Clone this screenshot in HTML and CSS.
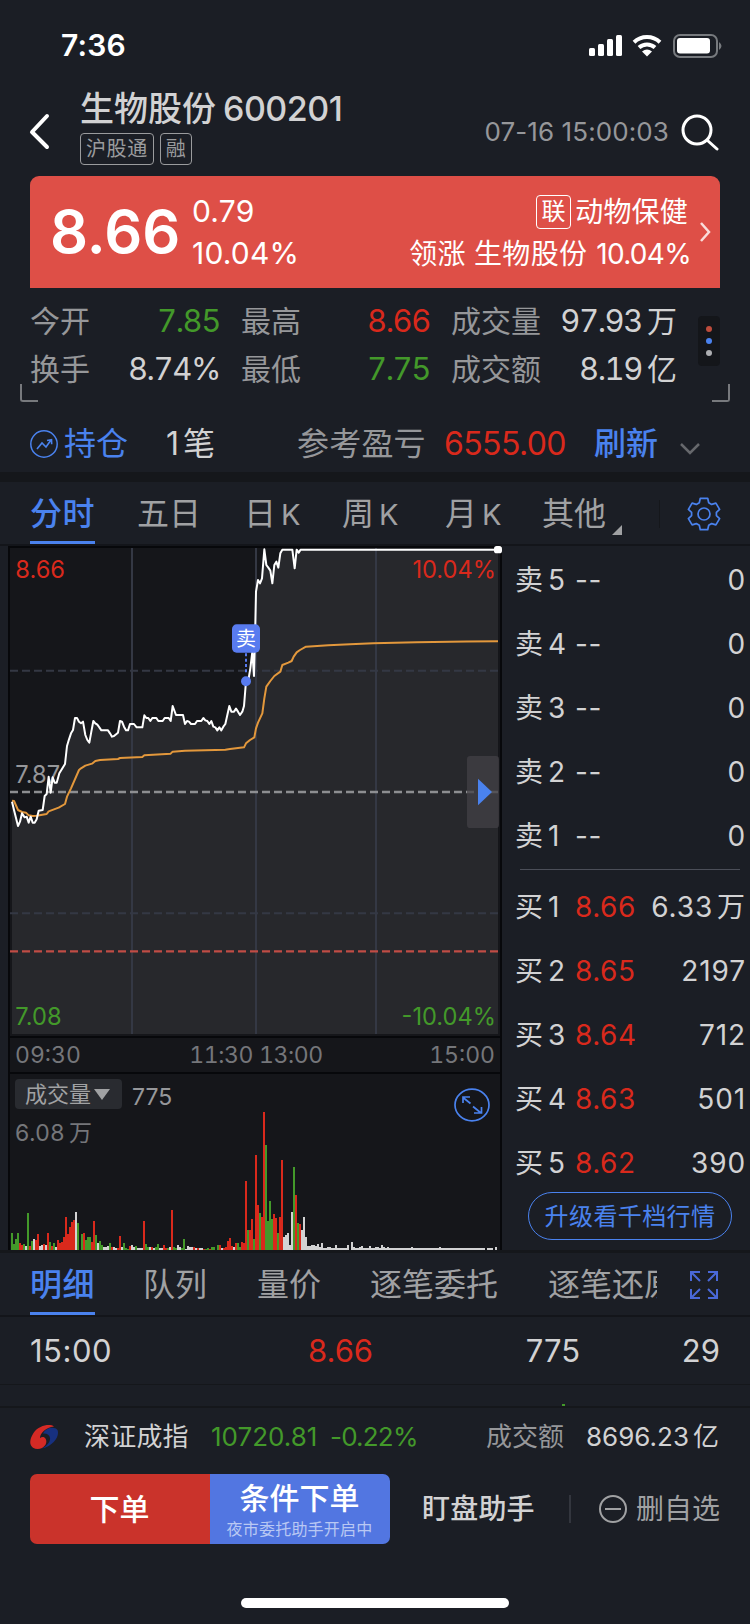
FILE: index.html
```html
<!DOCTYPE html>
<html lang="zh-CN">

<head>
    <meta charset="UTF-8">
    <meta name="viewport" content="width=device-width, initial-scale=1.0">
    <link rel="stylesheet" href="styles.css">
    <title>生物股份 600201</title>
</head>

<body>
    <div class="statusbar">
        <span class="clock">7:36</span>
        <svg class="status-icons" width="136" height="26" viewBox="0 0 136 26">
            <g fill="#fff">
                <rect x="3" y="15" width="6" height="8" rx="1.5" />
                <rect x="12" y="11" width="6" height="12" rx="1.5" />
                <rect x="21" y="6" width="6" height="17" rx="1.5" />
                <rect x="30" y="2" width="6" height="21" rx="1.5" />
            </g>
            <g fill="none" stroke="#fff" stroke-width="4">
                <path d="M48 9.2a19 19 0 0 1 26 0" />
                <path d="M53 14.5a12 12 0 0 1 16 0" />
            </g>
            <path d="M56 18.6q5-4 10 0l-5 5z" fill="#fff" />
            <rect x="88" y="2" width="43" height="22" rx="6" fill="none" stroke="#777a7e" stroke-width="2" />
            <rect x="91" y="5" width="33" height="15.500" rx="3" fill="#fff" />
            <path d="M133 9q5 4 0 8z" fill="#777a7e" />
        </svg>
    </div>

    <div class="header">
        <svg class="back" width="22" height="38" viewBox="0 0 22 38">
            <path d="M18 3L3 19l15 15" fill="none" stroke="#fff" stroke-width="4" stroke-linecap="round" stroke-linejoin="round" />
        </svg>
        <div class="stock">
            <h1><span>生物股份</span><span class="code">600201</span></h1>
            <div class="tags"><span class="tag">沪股通</span><span class="tag">融</span></div>
        </div>
        <span class="datetime">07-16 15:00:03</span>
        <svg class="search" width="38" height="38" viewBox="0 0 38 38" fill="none" stroke="#fff" stroke-width="3" stroke-linecap="round">
            <circle cx="16" cy="16" r="14" />
            <path d="M26.500 26.500L36 35" />
        </svg>
    </div>

    <div class="price-card">
        <span class="price">8.66</span>
        <div class="change">
            <span>0.79</span>
            <span>10.04%</span>
        </div>
        <div class="sector">
            <div class="sector-name"><span class="link-tag">联</span>动物保健</div>
            <div class="sector-top"><span>领涨 生物股份</span><span class="pct">10.04%</span></div>
        </div>
        <svg width="12" height="22" viewBox="0 0 12 22">
            <path d="M2 2l8 9-8 9" fill="none" stroke="#f9dcda" stroke-width="2.500" />
        </svg>
    </div>

    <div class="stats">
        <div class="stats-grid">
            <span class="label">今开</span><span class="num green">7.85</span>
            <span class="label">最高</span><span class="num red">8.66</span>
            <span class="label">成交量</span><span class="num">97.93<i>万</i></span>
            <span class="label">换手</span><span class="num">8.74%</span>
            <span class="label">最低</span><span class="num green">7.75</span>
            <span class="label">成交额</span><span class="num">8.19<i>亿</i></span>
        </div>
        <div class="dots"><b></b><b></b><b></b></div>
    </div>
    <div class="corners"><span></span><span></span></div>

    <div class="position">
        <svg class="pos-icon" width="28" height="28" viewBox="0 0 28 28" fill="none" stroke="#4a82ee">
            <circle cx="14" cy="14" r="13.200" stroke-width="1.500" />
            <path d="M7 19l5-6 4 4 5-7M17 10.500l4.500-.7.200 4.500" stroke-width="1.600" />
        </svg>
        <span class="hold">持仓</span>
        <span class="lots">1<i>笔</i></span>
        <span class="pl-label">参考盈亏</span>
        <span class="pl">6555.00</span>
        <span class="refresh">刷新</span>
        <svg class="fold" width="20" height="12" viewBox="0 0 20 12">
            <path d="M1 1l9 9 9-9" fill="none" stroke="#66686c" stroke-width="2.500" />
        </svg>
    </div>

    <div class="tabs">
        <span class="active">分时</span>
        <span>五日</span>
        <span>日<em>K</em></span>
        <span>周<em>K</em></span>
        <span>月<em>K</em></span>
        <span class="other">其他<svg width="10" height="10" viewBox="0 0 10 10"><path d="M10 0v10H0z" fill="#a0a1a3" /></svg></span>
        <svg class="gear" width="34" height="34" viewBox="0 0 34 34" fill="none" stroke="#4a82ee" stroke-width="1.700" stroke-linejoin="round">
            <path d="M13.300 1.300h7.400l1 4.400 3 1.700 4.200-1.300 3.700 6.300-3.200 3v3.200l3.200 3-3.700 6.300-4.200-1.300-3 1.700-1 4.400h-7.400l-1-4.400-3-1.700-4.200 1.300-3.700-6.300 3.200-3v-3.200l-3.200-3 3.700-6.300 4.200 1.300 3-1.700z" />
            <circle cx="17" cy="17" r="6" />
        </svg>
    </div>

    <div class="market">
        <div class="chart">
            <!-- plot units are a third of a pixel -->
            <svg class="trend" width="494" height="490" viewBox="24 18 1482 1470">
                <path class="area" d="" />
                <g stroke="#343844" stroke-width="6">
                    <path d="M396 24V1482M768 24V1482M1128 24V1482" />
                    <path d="M30 392H1494M30 1120H1494" stroke-dasharray="24 12" />
                </g>
                <path d="M30 756H1494" stroke="#8d8e91" stroke-width="7" stroke-dasharray="24 12" />
                <path d="M30 1234H1494" stroke="#c04c45" stroke-width="7" stroke-dasharray="24 12" />
                <g class="axis">
                    <text x="46" y="114" fill="#d9291c">8.66</text>
                    <text x="1488" y="114" fill="#d9291c" text-anchor="end">10.04%</text>
                    <text x="46" y="729" fill="#96979a">7.87</text>
                    <text x="46" y="1454" fill="#43992a">7.08</text>
                    <text x="1488" y="1454" fill="#43992a" text-anchor="end">-10.04%</text>
                </g>
                <polyline class="average" points="36,782 42,783 54,810 66,816 78,818 86,826 98,828 110,827 140,822 146,814 176,803 195,792 201,770 213,745 237,690 243,685 256,677 276,671 286,663 300,660 354,657 360,654 427,651 433,646 512,641 518,635 555,632 676,629 690,627 732,622 738,610 750,600 763,592 768,565 774,548 787,520 793,475 799,440 811,423 823,408 841,395 847,375 865,368 875,363 881,350 890,337 900,330 918,320 985,316 1050,313 1120,310 1250,307 1400,304.5 1494,304" />
                <polyline class="line" points="36,785 42,810 54,858 60,845 66,820 74,832 80,830 86,848 92,830 98,848 104,848 110,838 116,812 128,810 134,768 140,762 146,710 152,758 158,712 164,728 170,728 178,700 195,672 201,618 207,598 213,580 219,570 225,534 231,534 237,545 243,550 249,545 256,585 262,600 268,608 274,575 280,543 286,550 292,554 298,562 304,571 324,571 330,580 336,590 342,588 354,578 360,543 366,545 372,560 378,571 384,571 390,552 402,552 410,562 427,562 433,526 439,534 445,534 451,543 457,534 469,534 475,543 488,543 494,534 506,534 512,543 518,498 528,525 549,525 555,552 561,543 567,545 573,552 585,552 591,543 604,543 610,534 616,541 622,543 628,552 634,543 640,560 646,562 652,571 658,562 664,571 670,560 676,552 682,525 688,498 694,515 702,515 708,506 714,515 720,525 727,515 732,498 738,424 746,415 751,385 757,335 762,408 766,250 768,155 774,120 780,130 786,115 793,28 799,75 805,83 811,92 817,130 823,75 829,65 835,83 841,40 847,29 877,29 884,85 890,29 896,38 902,29 1494,29" />
                <path d="M738 340V400" stroke="#587bef" stroke-width="6" stroke-dasharray="9 7" />
                <rect x="696" y="253" width="84" height="85" rx="14" fill="#587bef" />
                <text class="sell-mark" x="738" y="318" text-anchor="middle">卖</text>
                <circle cx="738" cy="424" r="15" fill="#587bef" />
                <rect x="1401" y="648" width="96" height="216" rx="10" fill="#434046" fill-opacity=".75" />
                <path d="M1434 716v80l42-40z" fill="#4a82ee" />
                <rect x="1482" y="18" width="24" height="22" rx="8" fill="#fff" />
            </svg>
            <div class="times"><span>09:30</span><span class="noon">11:30 13:00</span><span>15:00</span></div>
            <div class="volume">
                <div class="volume-head">
                    <span class="select">成交量<svg width="16" height="11" viewBox="0 0 16 11"><path d="M0 0h16L8 11z" fill="#a0a1a3" /></svg></span>
                    <span class="last">775</span>
                    <svg class="zoom" width="36" height="34" viewBox="0 0 36 34" fill="none" stroke="#4a82ee">
                        <ellipse cx="18" cy="17" rx="17" ry="15.800" stroke-width="1.700" />
                        <path d="M16.500 15.500L9 9.500M9 15V9h7M19 18.500l8 6.500M20 25h7.500v-6" stroke-width="1.700" />
                    </svg>
                </div>
                <span class="volume-max">6.08<i>万</i></span>
                <svg class="bars" width="494" height="140" viewBox="24 240 1482 420" shape-rendering="crispEdges"></svg>
            </div>
        </div>

        <div class="book">
            <div class="order"><span>卖<em>5</em></span><span>--</span><span>0</span></div>
            <div class="order"><span>卖<em>4</em></span><span>--</span><span>0</span></div>
            <div class="order"><span>卖<em>3</em></span><span>--</span><span>0</span></div>
            <div class="order"><span>卖<em>2</em></span><span>--</span><span>0</span></div>
            <div class="order"><span>卖<em>1</em></span><span>--</span><span>0</span></div>
            <hr>
            <div class="order"><span>买<em>1</em></span><span class="red">8.66</span><span>6.33<i>万</i></span></div>
            <div class="order"><span>买<em>2</em></span><span class="red">8.65</span><span>2197</span></div>
            <div class="order"><span>买<em>3</em></span><span class="red">8.64</span><span>712</span></div>
            <div class="order"><span>买<em>4</em></span><span class="red">8.63</span><span>501</span></div>
            <div class="order"><span>买<em>5</em></span><span class="red">8.62</span><span>390</span></div>
            <a class="upgrade">升级看千档行情</a>
        </div>
    </div>

    <div class="tabs detail-tabs">
        <span class="active">明细</span>
        <span>队列</span>
        <span>量价</span>
        <span>逐笔委托</span>
        <span class="cut">逐笔还原</span>
        <svg class="expand" width="28" height="28" viewBox="0 0 28 28" fill="none" stroke="#4a68d8" stroke-width="2">
            <path d="M1 10V1h9M1 1l9 9M18 1h9v9M27 1l-9 9M1 18v9h9M1 27l9-9M27 18v9h-9M27 27l-9-9" />
        </svg>
    </div>

    <div class="trade">
        <span>15:00</span><span class="red">8.66</span><span>775</span><span>29</span>
    </div>
    <div class="trade-next"><span></span></div>

    <div class="index">
        <svg class="logo" width="29" height="26" viewBox="0 0 29 26">
            <path d="M24 2.500C20-.5 9 1 3.500 9-.5 15-1 21 3 23.800c4 2.500 10 1.200 12.500-3 1.500-3 1-6-1.500-7.500-1.500-.5-3 0-4 1C10 9 16 3.500 24 2.500z" fill="#d52a25" />
            <path d="M13 9.500C16 3 25 2 27.500 6c2.500 6-4 16-15.500 18.500 5-2.500 8.500-7 8-10.500-.5-3.500-3.500-5-7-4.500z" fill="#17307f" />
        </svg>
        <span class="index-name">深证成指</span>
        <span class="index-value green">10720.81</span>
        <span class="index-pct green">-0.22%</span>
        <span class="index-label">成交额</span>
        <span class="index-amount">8696.23<i>亿</i></span>
    </div>

    <div class="actions">
        <a class="order-btn">下单</a>
        <a class="cond-btn">条件下单<small>夜市委托助手开启中</small></a>
        <span class="watch">盯盘助手</span>
        <span class="sep"></span>
        <svg width="28" height="28" viewBox="0 0 28 28" fill="none" stroke="#a0a1a3" stroke-width="2">
            <circle cx="14" cy="14" r="13" />
            <path d="M6 14h16" />
        </svg>
        <span class="remove">删自选</span>
    </div>
    <div class="home"></div>

    <script src="chart.js"></script>
</body>

</html>
```
FILE: styles.css
```css
* {
    box-sizing: border-box;
}

body {
    width: 750px;
    height: 1624px;
    margin: 0;
    overflow: hidden;
    background-color: #1b1e25;
    color: #d2d2d3;
    font-family: Inter, "Noto Sans CJK SC", sans-serif;
    font-size: 30px;
    line-height: 1;
    white-space: nowrap;
}

svg {
    display: block;
    flex: none;
}

i,
em {
    font-style: normal;
}

i {
    margin-left: 4px;
}

.red {
    color: #d9291c;
}

.green {
    color: #43992a;
}

.statusbar {
    display: flex;
    justify-content: space-between;
    height: 90px;
    padding: 30px 28px 0 61px;
}

.clock {
    color: #fff;
    font-weight: 600;
    letter-spacing: 0.2px;
    line-height: 31px;
}

.status-icons {
    margin-top: 3px;
}

.header {
    display: flex;
    height: 86px;
    padding: 0 31px 0 29px;
}

.back {
    margin-top: 23px;
}

.stock {
    margin-left: 29px;
}

h1 {
    display: flex;
    gap: 7px;
    margin: 0;
    height: 43px;
    font-size: 34px;
    font-weight: 500;
    line-height: 37px;
}

.code {
    letter-spacing: -0.5px;
}

.tags {
    display: flex;
    gap: 6px;
}

.tag {
    height: 32px;
    padding: 0 5px;
    border: 1px solid #9a9b9d;
    border-radius: 4px;
    color: #9a9b9d;
    font-size: 20px;
    letter-spacing: 0.6px;
    line-height: 30px;
}

.datetime {
    margin: 29px 12px 0 auto;
    color: #96979a;
    font-size: 26px;
    letter-spacing: 0.1px;
}

.search {
    margin-top: 24px;
}

.price-card {
    display: flex;
    align-items: center;
    height: 112px;
    margin: 0 30px;
    padding: 0 9px 0 20px;
    border-radius: 9px 9px 0 0;
    background-color: #de4f47;
    color: #fff;
}

.price {
    width: 142px;
    font-size: 59.5px;
    font-weight: 600;
}

.change {
    letter-spacing: 0.2px;
}

.change span {
    display: block;
    height: 42px;
    line-height: 42px;
}

.sector {
    margin: 0 10px 0 auto;
    font-size: 28px;
}

.sector > div {
    display: flex;
    align-items: center;
    justify-content: flex-end;
    height: 42px;
    padding-top: 2px;
}

.sector .sector-name {
    padding-right: 1px;
    letter-spacing: 0.2px;
}

.link-tag {
    width: 35px;
    height: 34px;
    margin: -1px 4px 0 0;
    border: 1px solid #fff;
    border-radius: 4px;
    font-size: 24px;
    line-height: 31px;
    text-align: center;
}

.sector-top {
    letter-spacing: 0.3px;
}

.pct {
    margin: 0 -2px 0 9px;
    letter-spacing: -0.7px;
}

.stats {
    display: flex;
    height: 96px;
    padding: 9px 30px 0;
}

.stats-grid {
    display: grid;
    grid-template-columns: 60px 151px 60px 150px 90px 136px;
    grid-auto-rows: 48px;
    line-height: 48px;
}

.stats .label {
    color: #96979a;
}

.stats .num {
    font-size: 31px;
    font-feature-settings: "tnum";
    letter-spacing: -1.4px;
    text-align: right;
}

.stats .num i {
    margin-left: 5px;
    font-size: 30px;
    letter-spacing: 0;
}

.stats .num:nth-child(6n+2),
.stats .num:nth-child(6n+4) {
    padding-right: 21px;
}

.dots {
    display: flex;
    flex-direction: column;
    align-items: center;
    justify-content: center;
    gap: 6px;
    width: 22px;
    height: 50px;
    margin: 19px 0 0 auto;
    border-radius: 4px;
    background-color: #14161a;
}

.dots b {
    width: 6px;
    height: 6px;
    border-radius: 50%;
    background-color: #bd4c3c;
}

.dots b:nth-child(2) {
    background-color: #4a82ee;
}

.dots b:nth-child(3) {
    background-color: #adaeb1;
}

.corners {
    display: flex;
    justify-content: space-between;
    height: 31px;
    padding: 0 20px;
}

.corners span {
    width: 18px;
    height: 18px;
    border: solid #77797d;
    border-width: 0 0 2px 2px;
    border-radius: 0 0 0 3px;
}

.corners span + span {
    border-width: 0 2px 2px 0;
    border-radius: 0 0 3px 0;
}

.position {
    display: flex;
    align-items: center;
    height: 57px;
    padding-left: 30px;
    font-size: 32px;
    line-height: 57px;
}

.pos-icon {
    margin-top: 1px;
}

.hold {
    width: 101px;
    padding-left: 6px;
    color: #4a82ee;
}

.lots {
    width: 138px;
    padding-left: 7px;
}

.pl-label {
    width: 147px;
    color: #96979a;
    letter-spacing: 0.2px;
}

.pl {
    width: 150px;
    color: #d9291c;
    letter-spacing: -0.6px;
}

.refresh {
    width: 86px;
    color: #4a82ee;
    font-weight: 500;
}

.fold {
    margin-top: 10px;
}

.tabs {
    display: grid;
    grid-template-columns: 107px 107px 98px 103px 97px 145px 34px;
    height: 74px;
    padding: 0 30px;
    border-top: 10px solid #15171b;
    border-bottom: 2px solid #13151a;
    color: #a0a1a3;
    font-size: 32px;
    line-height: 64px;
}

.tabs em {
    margin-left: 5px;
    font-size: 29px;
}

.tabs .active {
    justify-self: start;
    height: 62px;
    border-bottom: 3px solid #4a82ee;
    color: #4a82ee;
    font-weight: 500;
    letter-spacing: 0.5px;
}

.other {
    display: flex;
    height: 28px;
    margin: 18px 27px 0 0;
    border-right: 1px solid #15171b;
    line-height: 28px;
}

.other svg {
    margin: 25px 0 0 6px;
}

.gear {
    margin-top: 15px;
}

.market {
    display: grid;
    grid-template-columns: 494px 1fr;
    height: 704px;
    padding-left: 8px;
}

.chart {
    height: 704px;
    background-color: #15161a;
    box-shadow: inset 2px 0 #07080b, inset -2px 0 #07080b, inset 0 2px #07080b;
}

.area {
    fill: #27282c;
}

.line,
.average {
    fill: none;
    stroke: #fff;
    stroke-width: 6;
    stroke-linejoin: round;
}

.average {
    stroke: #e3983c;
}

.axis {
    font-size: 71px;
}

.sell-mark {
    fill: #fff;
    font-size: 60px;
}

.times {
    display: flex;
    justify-content: space-between;
    height: 38px;
    padding: 0 5px;
    border: solid #07080b;
    border-width: 2px;
    color: #75767a;
    font-size: 23px;
    font-feature-settings: "tnum";
    line-height: 35px;
}

.noon {
    padding-left: 2px;
    letter-spacing: -0.4px;
}

.volume {
    height: 176px;
    overflow: hidden;
    color: #75767a;
    font-size: 23px;
}

.volume-head {
    display: flex;
    height: 42px;
    padding: 5px 12px 0 7px;
}

.select {
    display: flex;
    width: 107px;
    height: 30px;
    padding-left: 10px;
    border-radius: 4px;
    background-color: #292b30;
    color: #a0a1a3;
    font-size: 22px;
    line-height: 30px;
}

.select svg {
    margin: 10px 0 0 3px;
}

.last {
    padding-left: 10px;
    color: #96979a;
    line-height: 36px;
}

.zoom {
    margin: 9px 0 0 auto;
}

.volume-max {
    display: block;
    height: 0;
    padding-left: 7px;
    letter-spacing: 0.4px;
    line-height: 34px;
}

.bars {
    margin-top: -6px;
}

.book {
    padding: 2px 5px 0 13px;
    font-size: 28px;
}

.order {
    display: flex;
    height: 64px;
    line-height: 64px;
}

.order span:first-child {
    width: 60px;
}

.order em {
    margin-left: 5px;
}

.order span + span {
    letter-spacing: 0.5px;
}

.order span:last-child {
    margin: 0 -1px 0 auto;
    letter-spacing: 0.9px;
}

hr {
    height: 1px;
    margin: 1px 5px 5px 5px;
    border: 0;
    background-color: #4b4e58;
}

.upgrade {
    display: block;
    width: 204px;
    height: 48px;
    margin: -3px 0 0 13px;
    border: 1px solid #4a82ee;
    border-radius: 24px;
    color: #4a82ee;
    font-size: 24px;
    letter-spacing: 0.4px;
    line-height: 48px;
    text-align: center;
}

.detail-tabs {
    grid-template-columns: 113px 114px 113px 178px 109px 63px;
    height: 67px;
    border-top-width: 3px;
}

.cut {
    overflow: hidden;
}

.expand {
    justify-self: end;
    margin: 18px 2px 0 0;
}

.trade {
    display: grid;
    grid-template-columns: 1fr 65px 207px 140px;
    height: 68px;
    padding: 0 30px;
    border-bottom: 1px solid #15171b;
    font-size: 31px;
    line-height: 68px;
    text-align: right;
}

.trade span:first-child {
    letter-spacing: 0.5px;
    text-align: left;
}

.trade-next {
    display: flex;
    align-items: flex-end;
    height: 23px;
    padding-left: 562px;
    border-bottom: 2px solid #15171b;
}

.trade-next span {
    width: 3px;
    height: 2px;
    background-color: #43992a;
}

.index {
    display: flex;
    align-items: center;
    height: 57px;
    padding: 0 31px 0 30px;
    font-size: 26px;
    line-height: 55px;
}

.index-name {
    width: 127px;
    margin-left: 25px;
    letter-spacing: 0.2px;
}

.index-value {
    width: 119px;
}

.index-pct {
    letter-spacing: -0.8px;
}

.index-label {
    margin-left: auto;
    color: #96979a;
}

.index-amount {
    margin-left: 22px;
}

.actions {
    display: flex;
    align-items: center;
    height: 70px;
    margin: 9px 30px 0;
    font-size: 28px;
}

.order-btn,
.cond-btn {
    width: 180px;
    height: 70px;
    padding-right: 1px;
    border-radius: 7px 0 0 7px;
    background-color: #ca332b;
    color: #fff;
    font-size: 30px;
    font-weight: 500;
    line-height: 70px;
    text-align: center;
}

.cond-btn {
    border-radius: 0 7px 7px 0;
    background-color: #5276e1;
    line-height: 49px;
}

.cond-btn small {
    display: block;
    color: #b9c8f3;
    font-size: 16px;
    font-weight: 400;
    letter-spacing: 0.2px;
    line-height: 12px;
}

.watch {
    margin-left: 32px;
    font-weight: 500;
    letter-spacing: 0.2px;
}

.sep {
    width: 2px;
    height: 28px;
    margin: 0 28px 0 auto;
    background-color: #33363e;
}

.remove {
    margin-left: 9px;
    color: #a0a1a3;
}

.home {
    width: 268px;
    height: 10px;
    margin: 54px auto 0;
    border-radius: 5px;
    background-color: #fff;
}
```
FILE: chart.js
```js
// minute volume bars, colour letter followed by bar height
const volumes = `g52 g18 g33 g52 r20 r16 g17 w12 g112 r12 g28 w32 r30 r48 w12 w16 r18 w14 r52 g25
r12 g20 w10 r30 r22 r24 r38 r100 r48 r70 r84 r90 w114 g82 g48 r50 g30 g40 g40 r24
r88 g44 w20 g28 g16 w10 w10 w12 g22 r8 w10 w7 r6 r42 w8 g22 g6 g4 r12 w14
w8 g12 w6 w6 w6 r88 g18 g10 w8 r8 w6 g8 g18 w6 w6 r14 r6 g6 w8 r121
g8 g6 w14 w8 g6 g34 w4 w12 w8 w8 r8 w6 r6 w6 w6 r4 g4 g6 r4 g8
g8 g14 r14 w6 r6 r10 r26 r36 r12 w10 r20 g22 g8 r24 r22 r206 g60 r60 r94 g34
r286 r134 g110 r98 r414 g314 g86 g146 g92 r108 r96 g50 r98 r270 w38 w44 w50 w16 w114 g248
r164 g80 r78 w60 w100 w40 w12 w12 w14 w14 w12 w18 w8 w20 w6 w6 w9 w9 w5 w5
w14 w5 w5 w5 w5 w6 w14 w24 w9 w6 w6 w8 w12 w5 w5 w6 w12 w6 w6 w9
w9 w5 w14 w8 w6 w10 w5 w5 w5 w6 w5 w5 w6 w5 w5 w5 w5 w9 w5 w5
w5 w5 w5 w5 w5 w5 w5 w5 w5 w5 w5 w8 w5 w5 w7 w5 w5 w5 w5 w5
w5 w5 w5 w5 w5 w5 w5 w5 w5 w5 w5 w5 w5 w5 w5 w5 w5 w0 w8`;
const colors = { r: '#d9291c', g: '#43992a', w: '#d2d2d3' };

document.querySelector('.bars').innerHTML = volumes.split(/\s+/).map((v, i) => {
    const h = Number(v.slice(1));
    const x = 33 + 6 * Math.round(i * 1.015);
    return `<rect x="${x}" y="${660 - h}" width="6" height="${h}" fill="${colors[v[0]]}" />`;
}).join('');

// shade everything under the price line
const points = document.querySelector('.line').getAttribute('points');
document.querySelector('.area').setAttribute('d', `M36 1482L${points}V1482z`);
```
